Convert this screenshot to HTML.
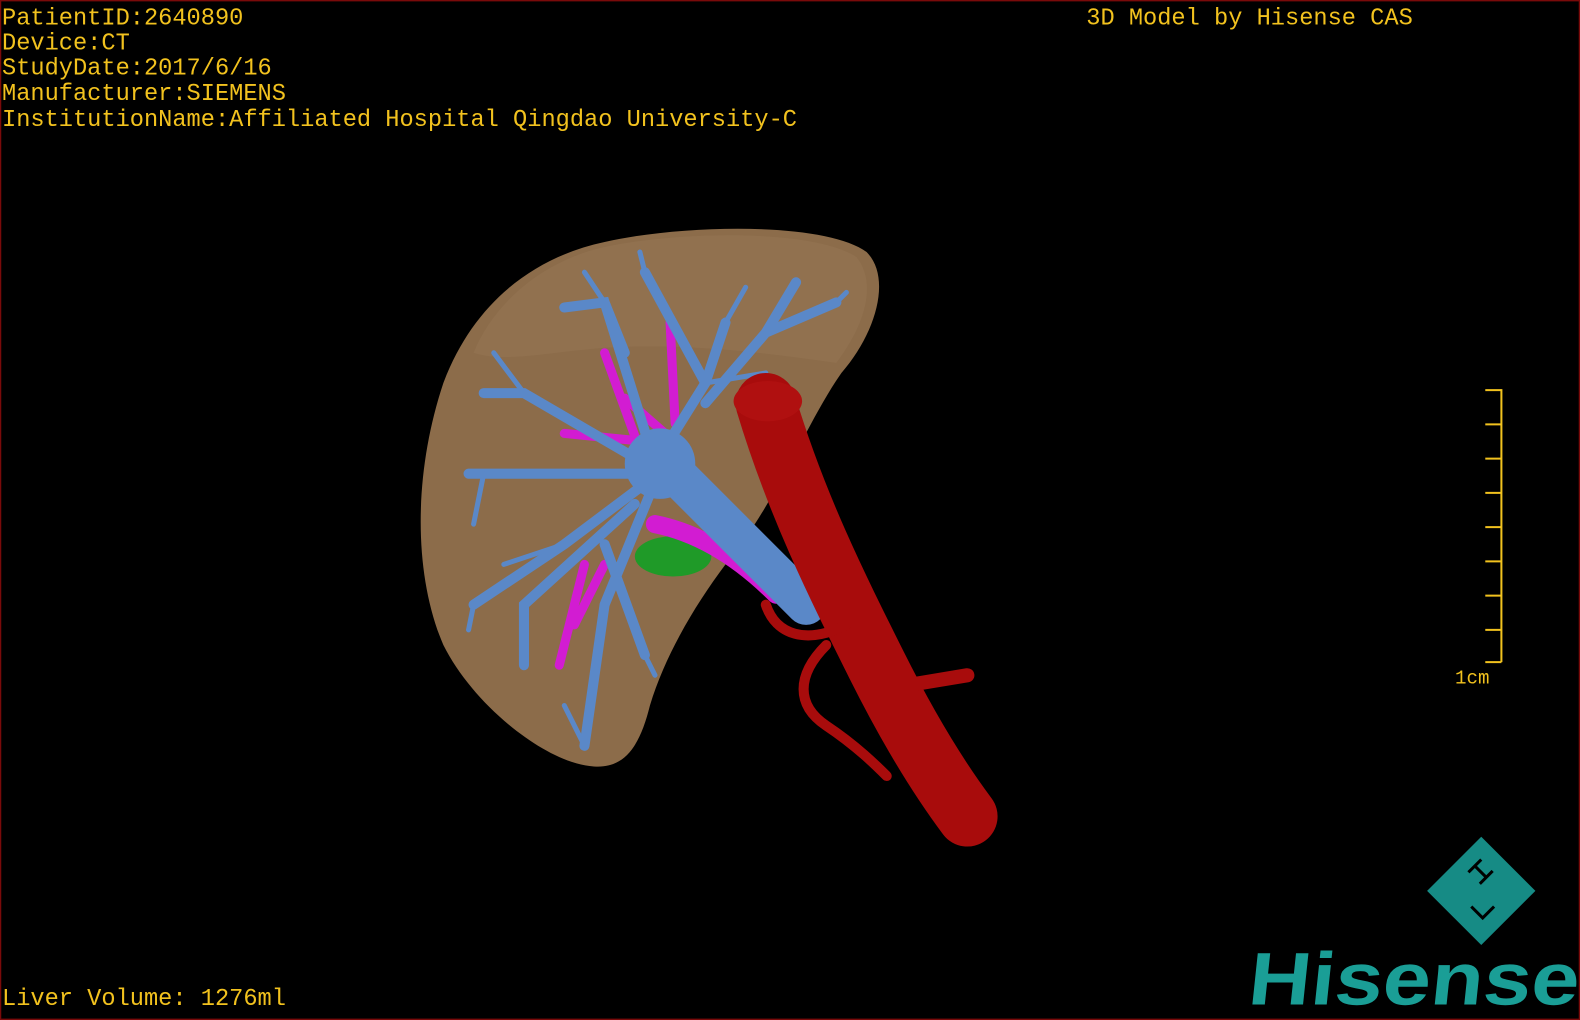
<!DOCTYPE html>
<html><head><meta charset="utf-8"><style>
html,body{margin:0;padding:0;background:#000;}
body{width:1580px;height:1020px;overflow:hidden;position:relative;}
svg{position:absolute;left:0;top:0;}
</style></head><body>
<svg width="1580" height="1020" viewBox="0 0 1568 1012" xmlns="http://www.w3.org/2000/svg">
<rect x="0.5" y="0.5" width="1567" height="1011" fill="#000" stroke="#7a0a0a" stroke-width="1.5"/>
<g font-family="Liberation Mono, monospace" font-size="23.5" fill="#f2c21e">
<text x="2" y="24">PatientID:2640890</text>
<text x="2" y="49">Device:CT</text>
<text x="2" y="74">StudyDate:2017/6/16</text>
<text x="2" y="99">Manufacturer:SIEMENS</text>
<text x="2" y="125">InstitutionName:Affiliated Hospital Qingdao University-C</text>
<text x="1078" y="24">3D Model by Hisense CAS</text>
<text x="2" y="997">Liver Volume: 1276ml</text>
<text x="1444" y="678" font-size="19">1cm</text>
</g>
<g stroke="#f2c21e" stroke-width="2" fill="none">
<path d="M1490 386V657"/>
<path d="M1474 387H1490M1474 421H1490M1474 455H1490M1474 489H1490M1474 523H1490M1474 557H1490M1474 591H1490M1474 625H1490M1474 657H1490"/>
</g>
<path d="M600 240 C680 222 820 220 860 250 C885 275 870 330 835 370 C800 420 770 500 720 560 C690 600 660 650 645 700 C635 740 620 765 585 760 C540 755 470 700 440 640 C410 570 410 470 440 380 C470 300 530 255 600 240Z" fill="#8c6c4a"/>
<path d="M600 245 C680 228 810 228 850 255 C870 280 860 320 830 360 C760 350 680 340 600 345 C540 350 500 360 470 350 C490 300 540 258 600 245Z" fill="#957553" opacity="0.6"/>
<ellipse cx="668" cy="552" rx="38" ry="20" fill="#1f9a28"/>
<g stroke="#d21cd2" stroke-linecap="round" fill="none">
<path d="M650 520 C700 530 740 560 770 590" stroke-width="18"/>
<path d="M660 430 L620 395 M660 440 L560 430 M640 460 L600 350 M670 420 L665 320 M580 560 L555 660 M600 560 L570 620" stroke-width="9"/>
</g>
<g stroke="#5a88c8" stroke-linecap="round" fill="none">
<path d="M660 460 L800 600" stroke-width="40"/>
<path d="M650 460 L700 380 L720 320 M700 400 L760 330 L830 300 M650 460 L600 300 L560 305 M640 460 L520 390 L480 390 M640 470 L480 470 L465 470 M640 480 L560 540 L470 600 M645 490 L600 600 L580 740 M630 500 L520 600 L520 660 M600 540 L640 650 M700 380 L640 270 M600 300 L620 350 M760 330 L790 280" stroke-width="10"/>
<path d="M720 320 L740 285 M830 300 L840 290 M520 390 L490 350 M480 470 L470 520 M560 540 L500 560 M470 600 L465 625 M580 740 L560 700 M640 650 L650 670 M600 300 L580 270 M700 380 L760 370 M640 270 L635 250" stroke-width="5"/>
</g>
<circle cx="655" cy="460" r="35" fill="#5a88c8"/>
<g stroke="#a80c0c" stroke-linecap="round" fill="none">
<path d="M760 400 C790 500 830 580 870 660 C900 720 930 770 960 810" stroke-width="60"/>
<path d="M840 620 C800 640 770 630 760 600 M820 640 C790 670 790 700 820 720 C850 740 870 760 880 770" stroke-width="10"/>
<path d="M900 680 L960 670" stroke-width="14"/>
</g>
<ellipse cx="762" cy="398" rx="34" ry="20" fill="#b01010"/>
<g transform="translate(1470,884) rotate(45)">
<rect x="-38" y="-38" width="76" height="76" fill="#168b85"/>
<path d="M-22 -22 V-4 M-22 -13 H-6 M-6 -22 V-4 M4 18 H20 V2" stroke="#000" stroke-width="3" fill="none"/>
</g>
<text x="1238" y="997" font-family="Liberation Sans, sans-serif" font-weight="bold" font-size="74" fill="#1a9e96" textLength="328" lengthAdjust="spacingAndGlyphs" transform="skewX(-6) translate(104,0)">Hisense</text>
</svg>
</body></html>
